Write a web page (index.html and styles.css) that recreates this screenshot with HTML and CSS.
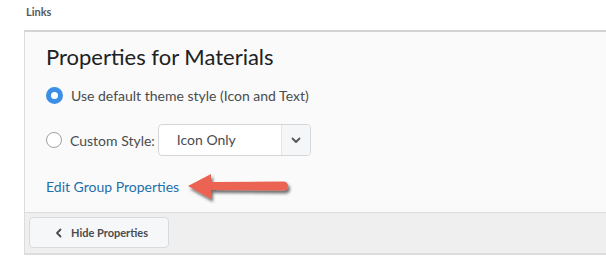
FILE: index.html
```html
<!DOCTYPE html>
<html lang="en">
<head>
  <meta charset="UTF-8">
  <title>Properties for Materials</title>
  <link rel="stylesheet" href="styles.css">
</head>
<body>
  <div class="crumb">Links</div>
  <div class="panel">
    <div class="panel-body">
      <h2>Properties for Materials</h2>
      <label class="opcao">
        <span class="radio radio-on"></span>
        <span>Use default theme style (Icon and Text)</span>
      </label>
      <label class="opcao opcao-select">
        <span class="radio"></span>
        <span>Custom Style:</span>
        <span class="select">
          <span class="select-valor">Icon Only</span>
          <span class="select-seta">
            <svg width="10" height="7" viewBox="0 0 10 7"><path d="M1.5 1.5 L5 5 L8.5 1.5" fill="none" stroke="#555" stroke-width="1.8" stroke-linecap="round" stroke-linejoin="round"/></svg>
          </span>
        </span>
      </label>
      <div class="link-linha">
        <a href="#" class="link">Edit Group Properties</a>
        <!-- seta de anotação por cima da tela -->
        <svg class="seta" width="120" height="44" viewBox="0 0 120 44">
          <defs>
            <filter id="sombra" x="-20%" y="-40%" width="140%" height="180%">
              <feDropShadow dx="2" dy="3" stdDeviation="1.6" flood-color="#000" flood-opacity="0.55"/>
            </filter>
          </defs>
          <path d="M3 16 L26 4 L26 12 L99 11.5 Q103 12 103 16 Q103 20 99 20.5 L26 20 L26 29 Z" fill="#ea6352" filter="url(#sombra)"/>
        </svg>
      </div>
    </div>
    <div class="panel-footer">
      <button type="button" class="btn">
        <svg width="8" height="10" viewBox="0 0 8 10"><path d="M5.5 1.5 L2 5 L5.5 8.5" fill="none" stroke="#494c4e" stroke-width="1.8" stroke-linecap="round" stroke-linejoin="round"/></svg>
        Hide Properties
      </button>
    </div>
  </div>
</body>
</html>
```

FILE: styles.css
```css
body {
  font-family: Lato, "Open Sans", sans-serif;
  background-color: #fff;
  margin: 0;
  padding: 0;
}

.crumb {
  font-size: 11px;
  font-weight: bold;
  color: #56595c;
  padding: 5px 0 0 26px;
  height: 22px;
  box-sizing: border-box;
}

.panel {
  margin-top: 8px;
  margin-left: 24px;
  background-color: #fafafa;
  border-top: 2px solid #d3d3d3;
  border-left: 1px solid #dcdcdc;
  border-bottom: 2px solid #dcdcdc;
}

.panel-body {
  padding: 11px 22px 16px 21px;
}

h2 {
  font-size: 22px;
  font-weight: normal;
  color: #202122;
  line-height: 28px;
  margin: 0 0 9px 0;
}

.opcao {
  display: flex;
  align-items: center;
  gap: 8px;
  height: 30px;
  font-size: 14px;
  color: #494c4e;
}

.opcao-select {
  height: 32px;
  margin-top: 14px;
  gap: 0;
}

.opcao-select .radio {
  margin-right: 8px;
}

.radio {
  width: 16px;
  height: 16px;
  border-radius: 50%;
  border: 1px solid #9da1a5;
  background-color: #fff;
  box-sizing: border-box;
}

.radio-on {
  width: 17px;
  height: 17px;
  border: 5px solid #3b8fe6;
  background-color: #fff;
}

.select {
  display: flex;
  margin-left: 3px;
  width: 153px;
  height: 32px;
  border: 1px solid #d3d7da;
  border-radius: 4px;
  background-color: #fff;
  box-sizing: border-box;
}

.select-valor {
  flex: 1;
  line-height: 30px;
  padding-left: 18px;
  font-size: 14px;
  color: #494c4e;
}

.select-seta {
  width: 28px;
  display: flex;
  align-items: center;
  justify-content: center;
  background-color: #f5f6f7;
  border-left: 1px solid #e3e6e8;
  border-radius: 0 4px 4px 0;
}

.link-linha {
  position: relative;
  margin-top: 20px;
  height: 20px;
  line-height: 20px;
}

.link {
  font-size: 14px;
  color: #1d6fad;
  text-decoration: none;
}

.seta {
  position: absolute;
  left: 139px;
  top: -6px;
}

.panel-footer {
  border-top: 1px solid #dcdcdc;
  background-color: #efefef;
  padding: 4px 5px 5px 4px;
}

.btn {
  display: flex;
  align-items: center;
  gap: 8px;
  width: 140px;
  height: 31px;
  padding-left: 25px;
  font-family: Lato, sans-serif;
  font-size: 11px;
  font-weight: bold;
  color: #494c4e;
  background-color: #f6f7f8;
  border: 1px solid #d8dbde;
  border-radius: 4px;
  box-sizing: border-box;
  cursor: pointer;
}
```
